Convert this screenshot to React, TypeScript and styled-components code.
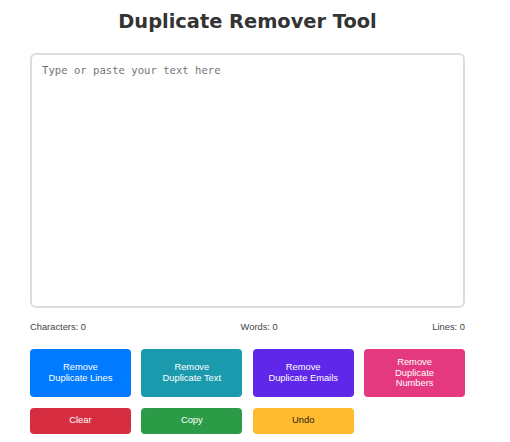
import React, { useState } from "react";
import styled, { createGlobalStyle } from "styled-components";

const GlobalStyle = createGlobalStyle`
  body {
    margin: 0;
    background: #ffffff;
    font-family: "Liberation Sans", Arial, sans-serif;
  }
`;

const Page = styled.div`
  width: 435px;
  margin-left: 30px;
  padding-top: 9px;
`;

const Title = styled.h1`
  margin: 0 0 18px 0;
  text-align: center;
  font-family: "DejaVu Sans", Verdana, sans-serif;
  font-size: 19.4px;
  line-height: 26px;
  font-weight: bold;
  color: #333333;
`;

const TextArea = styled.textarea`
  display: block;
  box-sizing: border-box;
  width: 100%;
  height: 255px;
  padding: 8px 10px;
  border: 2px solid #dddddd;
  border-radius: 6px;
  resize: none;
  outline: none;
  font-family: "DejaVu Sans Mono", monospace;
  font-size: 10.6px;
  line-height: 14px;
  color: #333;
  &::placeholder {
    color: #757575;
  }
`;

const Stats = styled.div`
  display: flex;
  justify-content: space-between;
  margin-top: 14px;
  font-size: 9.33px;
  line-height: 11px;
  color: #444444;
`;

const ButtonGrid = styled.div`
  display: grid;
  grid-template-columns: repeat(4, 1fr);
  column-gap: 10.5px;
  row-gap: 10.5px;
  margin-top: 16px;
`;

const ActionButton = styled.button<{ $bg: string; $fg?: string; $tall?: boolean }>`
  height: ${(p) => (p.$tall ? "48px" : "26px")};
  border: none;
  border-radius: 4px;
  background: ${(p) => p.$bg};
  color: ${(p) => p.$fg || "#ffffff"};
  font-family: "Liberation Sans", Arial, sans-serif;
  font-size: 9.33px;
  line-height: 10.7px;
  padding: 0 6px;
  text-align: center;
  cursor: pointer;
`;

export default function App() {
  const [text, setText] = useState("");
  const chars = text.length;
  const words = text.trim() ? text.trim().split(/\s+/).length : 0;
  const lines = text ? text.split("\n").length : 0;

  return (
    <>
      <GlobalStyle />
      <Page>
        <Title>Duplicate Remover Tool</Title>
        <TextArea
          placeholder="Type or paste your text here"
          value={text}
          onChange={(e) => setText(e.target.value)}
        />
        <Stats>
          <span>Characters: {chars}</span>
          <span>Words: {words}</span>
          <span>Lines: {lines}</span>
        </Stats>
        <ButtonGrid>
          <ActionButton $tall $bg="#007bff">
            Remove
            <br />
            Duplicate Lines
          </ActionButton>
          <ActionButton $tall $bg="#1b9aae">
            Remove
            <br />
            Duplicate Text
          </ActionButton>
          <ActionButton $tall $bg="#5f27ea">
            Remove
            <br />
            Duplicate Emails
          </ActionButton>
          <ActionButton $tall $bg="#e4397e">
            Remove
            <br />
            Duplicate
            <br />
            Numbers
          </ActionButton>
          <ActionButton $bg="#d62e40">Clear</ActionButton>
          <ActionButton $bg="#2b9b48">Copy</ActionButton>
          <ActionButton $bg="#ffba2e" $fg="#222222">
            Undo
          </ActionButton>
        </ButtonGrid>
      </Page>
    </>
  );
}
